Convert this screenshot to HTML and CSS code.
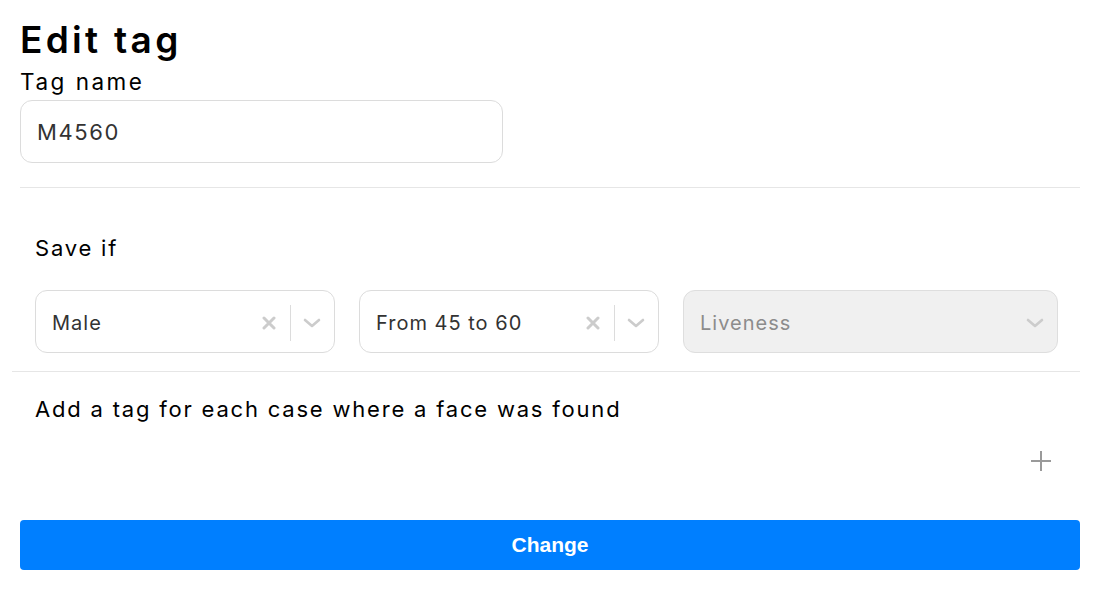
FILE: index.html
```html
<!DOCTYPE html>
<html>
<head>
<meta charset="utf-8">
<link rel="stylesheet" href="styles.css">
</head>
<body>
<div class="page">
  <h1 class="title">Edit tag</h1>
  <label class="field-label">Tag name</label>
  <div class="text-input">M4560</div>
  <div class="divider"></div>

  <div class="section">
    <div class="section-label">Save if</div>
    <div class="select-row">
      <div class="select">
        <span class="select-value">Male</span>
        <div class="indicators">
          <svg class="clear" viewBox="0 0 14 14" width="14" height="14"><path d="M2 2L12 12M12 2L2 12" stroke="#cccccc" stroke-width="3" stroke-linecap="round" fill="none"/></svg>
          <span class="sep"></span>
          <svg class="chev" viewBox="0 0 18 10" width="18" height="10"><path d="M2 2L9 8L16 2" stroke="#cccccc" stroke-width="2.6" stroke-linecap="round" stroke-linejoin="round" fill="none"/></svg>
        </div>
      </div>
      <div class="select">
        <span class="select-value">From 45 to 60</span>
        <div class="indicators">
          <svg class="clear" viewBox="0 0 14 14" width="14" height="14"><path d="M2 2L12 12M12 2L2 12" stroke="#cccccc" stroke-width="3" stroke-linecap="round" fill="none"/></svg>
          <span class="sep"></span>
          <svg class="chev" viewBox="0 0 18 10" width="18" height="10"><path d="M2 2L9 8L16 2" stroke="#cccccc" stroke-width="2.6" stroke-linecap="round" stroke-linejoin="round" fill="none"/></svg>
        </div>
      </div>
      <div class="select select-disabled">
        <span class="select-placeholder">Liveness</span>
        <div class="indicators">
          <svg class="chev" viewBox="0 0 18 10" width="18" height="10"><path d="M2 2L9 8L16 2" stroke="#cccccc" stroke-width="2.6" stroke-linecap="round" stroke-linejoin="round" fill="none"/></svg>
        </div>
      </div>
    </div>
  </div>
  <div class="divider divider-wide"></div>

  <div class="section">
    <div class="section-label">Add a tag for each case where a face was found</div>
    <div class="add-row">
      <svg class="plus" viewBox="0 0 22 22" width="22" height="22"><path d="M11 1v20M1 11h20" stroke="#9a9a9a" stroke-width="2" fill="none"/></svg>
    </div>
  </div>

  <button class="submit">Change</button>
</div>
</body>
</html>
```

FILE: styles.css
```css
* { box-sizing: border-box; }
html, body { margin: 0; padding: 0; background: #ffffff; }
body {
  font-family: "Inter", "DejaVu Sans", sans-serif;
  color: #000;
}
.page {
  padding: 12px 21px 0 20px;
  display: flex;
  flex-direction: column;
}
.title {
  margin: 0;
  font-size: 37px;
  line-height: 56px;
  font-weight: 600;
  letter-spacing: 3.3px;
  height: 56px;
}
.field-label {
  display: block;
  font-size: 22.5px;
  line-height: 28px;
  letter-spacing: 2.5px;
  height: 32px;
}
.text-input {
  width: 483px;
  height: 63px;
  border: 1px solid #dcdcdc;
  border-radius: 12px;
  padding: 0 16px;
  display: flex;
  align-items: center;
  font-size: 22px;
  letter-spacing: 1.6px;
  color: #333;
}
.divider {
  height: 1px;
  background: #e6e6e6;
  margin-top: 24px;
}
.divider-wide {
  margin-left: -8px;
  margin-top: 18px;
}
.section {
  padding: 0 22px 0 15px;
}
.section-label {
  font-size: 22px;
  line-height: 28px;
  letter-spacing: 1.8px;
  margin-top: 46px;
}
.divider-wide + .section .section-label {
  margin-top: 23px;
}
.select-row {
  display: flex;
  gap: 24px;
  margin-top: 28px;
}
.select {
  width: 300px;
  height: 63px;
  border: 1px solid #dcdcdc;
  border-radius: 12px;
  padding: 2px 0 0 16px;
  display: flex;
  align-items: center;
  justify-content: space-between;
  font-size: 20px;
  letter-spacing: 1px;
  color: #333;
}
.select-disabled {
  width: 375px;
  background: #f0f0f0;
  border-color: #dedede;
}
.select-placeholder { color: #8c8c8c; }
.indicators {
  display: flex;
  align-items: center;
  height: 100%;
  padding-right: 13px;
}
.clear { display: block; margin-right: 14px; }
.sep {
  width: 1px;
  height: 36px;
  background: #dcdcdc;
  margin-right: 12px;
}
.chev { display: block; }
.add-row {
  display: flex;
  justify-content: flex-end;
  margin-top: 27px;
  padding-right: 6px;
}
.plus { display: block; }
.submit {
  margin-top: 48px;
  height: 50px;
  width: 100%;
  border: none;
  border-radius: 4px;
  background: #007fff;
  color: #fff;
  font-family: "Liberation Sans", Arial, sans-serif;
  font-weight: bold;
  font-size: 21px;
}
```
